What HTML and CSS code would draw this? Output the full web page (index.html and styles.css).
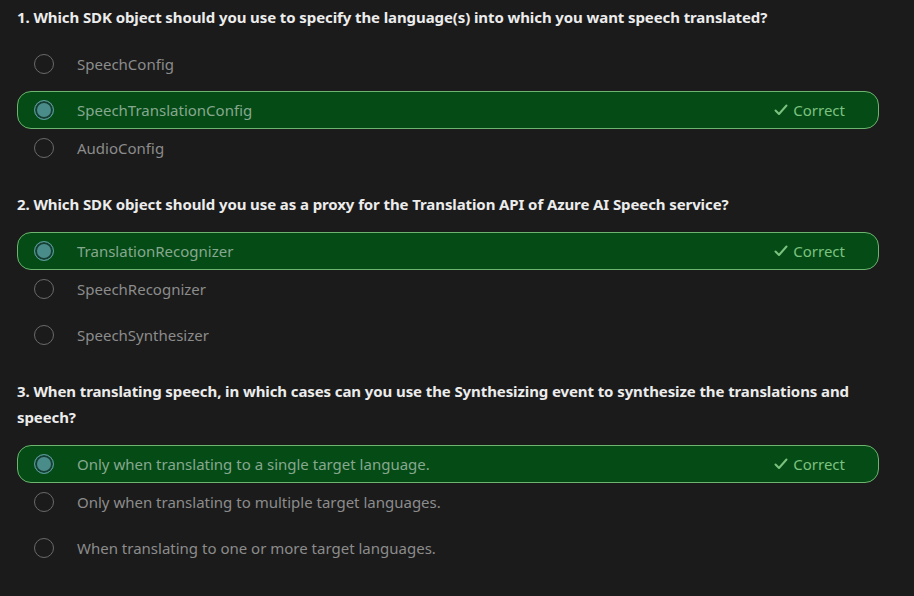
FILE: index.html
```html
<!DOCTYPE html>
<html lang="en">
<head>
<meta charset="utf-8">
<title>Knowledge check</title>
<link rel="stylesheet" href="styles.css">
</head>
<body>
<main class="quiz">
  <section class="question">
    <h2 class="q-title">1. Which SDK object should you use to specify the language(s) into which you want speech translated?</h2>
    <div class="options">
      <div class="option"><span class="radio"></span><span class="label">SpeechConfig</span></div>
      <div class="option selected"><span class="radio"></span><span class="label">SpeechTranslationConfig</span><span class="status"><svg class="check" viewBox="0 0 16 16" width="16" height="16"><path d="M2.5 8.5 L6 12 L13.5 3.5" fill="none" stroke="currentColor" stroke-width="2" stroke-linecap="round" stroke-linejoin="round"/></svg>Correct</span></div>
      <div class="option"><span class="radio"></span><span class="label">AudioConfig</span></div>
    </div>
  </section>
  <section class="question">
    <h2 class="q-title">2. Which SDK object should you use as a proxy for the Translation API of Azure AI Speech service?</h2>
    <div class="options">
      <div class="option selected"><span class="radio"></span><span class="label">TranslationRecognizer</span><span class="status"><svg class="check" viewBox="0 0 16 16" width="16" height="16"><path d="M2.5 8.5 L6 12 L13.5 3.5" fill="none" stroke="currentColor" stroke-width="2" stroke-linecap="round" stroke-linejoin="round"/></svg>Correct</span></div>
      <div class="option"><span class="radio"></span><span class="label">SpeechRecognizer</span></div>
      <div class="option"><span class="radio"></span><span class="label">SpeechSynthesizer</span></div>
    </div>
  </section>
  <section class="question">
    <h2 class="q-title">3. When translating speech, in which cases can you use the Synthesizing event to synthesize the translations and speech?</h2>
    <div class="options">
      <div class="option selected"><span class="radio"></span><span class="label">Only when translating to a single target language.</span><span class="status"><svg class="check" viewBox="0 0 16 16" width="16" height="16"><path d="M2.5 8.5 L6 12 L13.5 3.5" fill="none" stroke="currentColor" stroke-width="2" stroke-linecap="round" stroke-linejoin="round"/></svg>Correct</span></div>
      <div class="option"><span class="radio"></span><span class="label">Only when translating to multiple target languages.</span></div>
      <div class="option"><span class="radio"></span><span class="label">When translating to one or more target languages.</span></div>
    </div>
  </section>
</main>
</body>
</html>
```

FILE: styles.css
```css
html, body {
  margin: 0;
  padding: 0;
  background: #1b1b1b;
}

body {
  font-family: "Noto Sans", "Open Sans", sans-serif;
  color: #e6e6e6;
}

.quiz {
  width: 862px;
  padding: 4px 0 0 17px;
  display: flex;
  flex-direction: column;
  gap: 24px;
}

.q-title {
  margin: 0 0 15px 0;
  font-size: 15px;
  font-weight: 700;
  line-height: 26px;
  color: #ececec;
  letter-spacing: -0.1px;
}

.options {
  display: flex;
  flex-direction: column;
}

.option {
  height: 38px;
  box-sizing: border-box;
  border: 1px solid transparent;
  border-radius: 14px;
  display: flex;
  align-items: center;
  padding: 0 33px 0 16px;
  margin-bottom: 8px;
  font-size: 15px;
  color: #8c8c8c;
}

.option:last-child {
  margin-bottom: 0;
}

.option.selected {
  margin-bottom: 0;
  background: #054b16;
  border-color: #6cb46f;
  color: #86a88e;
}

.radio {
  width: 20px;
  height: 20px;
  box-sizing: border-box;
  border-radius: 50%;
  border: 1.5px solid #6a6a6a;
  flex: none;
  margin-right: 23px;
}

.selected .radio {
  border: 1px solid #5a9a98;
  background: #4a8c8a;
  box-shadow: inset 0 0 0 2px #163f33;
}

.label {
  flex: 1;
}

.status {
  display: flex;
  align-items: center;
  gap: 4px;
  color: #7cc27f;
  font-size: 15px;
}

.check {
  display: block;
}
```
